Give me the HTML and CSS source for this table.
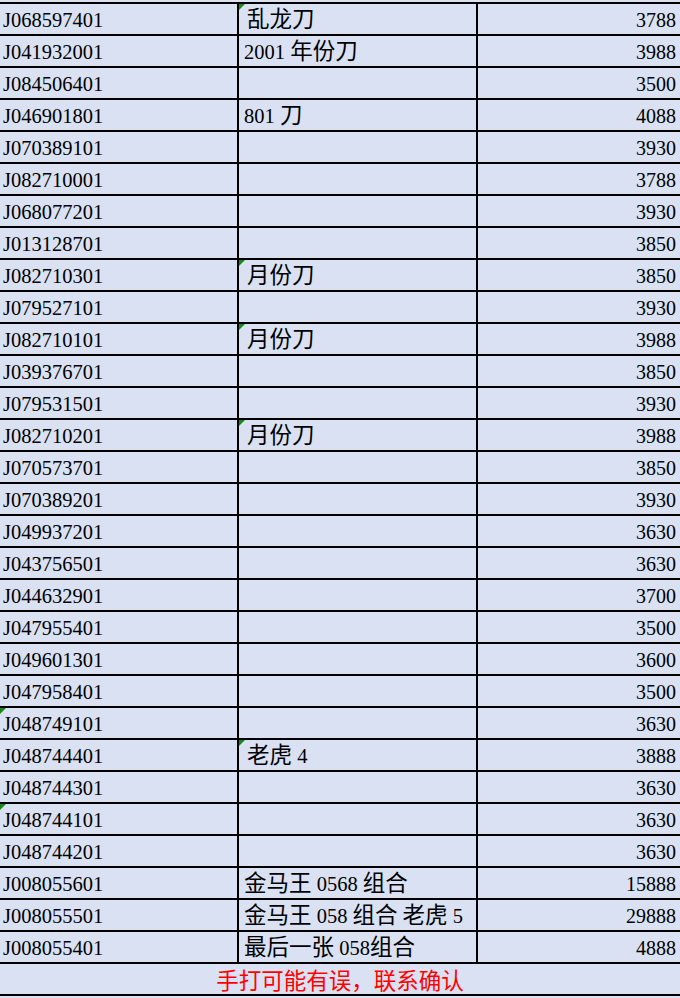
FILE: index.html
```html
<!DOCTYPE html>
<html lang="zh">
<head>
<meta charset="utf-8">
<title>Sheet</title>
<link rel="stylesheet" href="styles.css">
</head>
<body>
<div class="sheet">
  <div class="c id">J068597401</div><div class="c txt mark"><span class="zh">乱龙刀</span></div><div class="c num">3788</div>
  <div class="c id">J041932001</div><div class="c txt">2001 <span class="zh">年份刀</span></div><div class="c num">3988</div>
  <div class="c id">J084506401</div><div class="c txt"></div><div class="c num">3500</div>
  <div class="c id">J046901801</div><div class="c txt">801 <span class="zh">刀</span></div><div class="c num">4088</div>
  <div class="c id">J070389101</div><div class="c txt"></div><div class="c num">3930</div>
  <div class="c id">J082710001</div><div class="c txt"></div><div class="c num">3788</div>
  <div class="c id">J068077201</div><div class="c txt"></div><div class="c num">3930</div>
  <div class="c id">J013128701</div><div class="c txt"></div><div class="c num">3850</div>
  <div class="c id">J082710301</div><div class="c txt mark"><span class="zh">月份刀</span></div><div class="c num">3850</div>
  <div class="c id">J079527101</div><div class="c txt"></div><div class="c num">3930</div>
  <div class="c id">J082710101</div><div class="c txt mark"><span class="zh">月份刀</span></div><div class="c num">3988</div>
  <div class="c id">J039376701</div><div class="c txt"></div><div class="c num">3850</div>
  <div class="c id">J079531501</div><div class="c txt"></div><div class="c num">3930</div>
  <div class="c id">J082710201</div><div class="c txt mark"><span class="zh">月份刀</span></div><div class="c num">3988</div>
  <div class="c id">J070573701</div><div class="c txt"></div><div class="c num">3850</div>
  <div class="c id">J070389201</div><div class="c txt"></div><div class="c num">3930</div>
  <div class="c id">J049937201</div><div class="c txt"></div><div class="c num">3630</div>
  <div class="c id">J043756501</div><div class="c txt"></div><div class="c num">3630</div>
  <div class="c id">J044632901</div><div class="c txt"></div><div class="c num">3700</div>
  <div class="c id">J047955401</div><div class="c txt"></div><div class="c num">3500</div>
  <div class="c id">J049601301</div><div class="c txt"></div><div class="c num">3600</div>
  <div class="c id">J047958401</div><div class="c txt"></div><div class="c num">3500</div>
  <div class="c id flag">J048749101</div><div class="c txt"></div><div class="c num">3630</div>
  <div class="c id">J048744401</div><div class="c txt mark"><span class="zh">老虎</span> 4</div><div class="c num">3888</div>
  <div class="c id">J048744301</div><div class="c txt"></div><div class="c num">3630</div>
  <div class="c id flag">J048744101</div><div class="c txt"></div><div class="c num">3630</div>
  <div class="c id">J048744201</div><div class="c txt"></div><div class="c num">3630</div>
  <div class="c id">J008055601</div><div class="c txt"><span class="zh">金马王</span> 0568 <span class="zh">组合</span></div><div class="c num">15888</div>
  <div class="c id">J008055501</div><div class="c txt"><span class="zh">金马王</span> 058 <span class="zh">组合 老虎</span> 5</div><div class="c num">29888</div>
  <div class="c id">J008055401</div><div class="c txt"><span class="zh">最后一张</span> 058<span class="zh">组合</span></div><div class="c num">4888</div>
  <div class="c note">手打可能有误，联系确认</div>
</div>
</body>
</html>
```

FILE: styles.css
```css
html, body {
  margin: 0;
  padding: 0;
  background: #d9e1f2;
}

body {
  width: 680px;
  height: 998px;
  overflow: hidden;
}

.sheet {
  margin-top: 2px;
  display: grid;
  grid-template-columns: 237px 237px 202px;
  grid-auto-rows: 30px;
  gap: 2px;
  padding: 2px 0;
  background: #000;
  font-family: "Liberation Serif", "Noto Sans CJK SC", serif;
  font-size: 20.5px;
  color: #000;
}

.c {
  position: relative;
  background: #d9e1f2;
  display: flex;
  align-items: flex-start;
  line-height: 28px;
  padding-top: 2px;
  box-sizing: border-box;
  white-space: pre;
}

.zh {
  font-family: "Noto Sans CJK SC", sans-serif;
  font-size: 22.5px;
  line-height: 22px;
}

.id {
  padding-left: 3px;
}

.txt {
  padding-left: 5px;
}

.num {
  font-size: 20px;
  justify-content: flex-end;
  padding-right: 4px;
}

.mark {
  padding-left: 8px;
}

.mark::before,
.flag::before {
  content: "";
  position: absolute;
  left: 0;
  top: 0;
  border-top: 6px solid #168a16;
  border-right: 6px solid transparent;
}

.note {
  grid-column: 1 / -1;
  justify-content: center;
  color: #ff0000;
  font-family: "Noto Sans CJK SC", sans-serif;
  font-size: 22.5px;
  line-height: 26px;
}
```
